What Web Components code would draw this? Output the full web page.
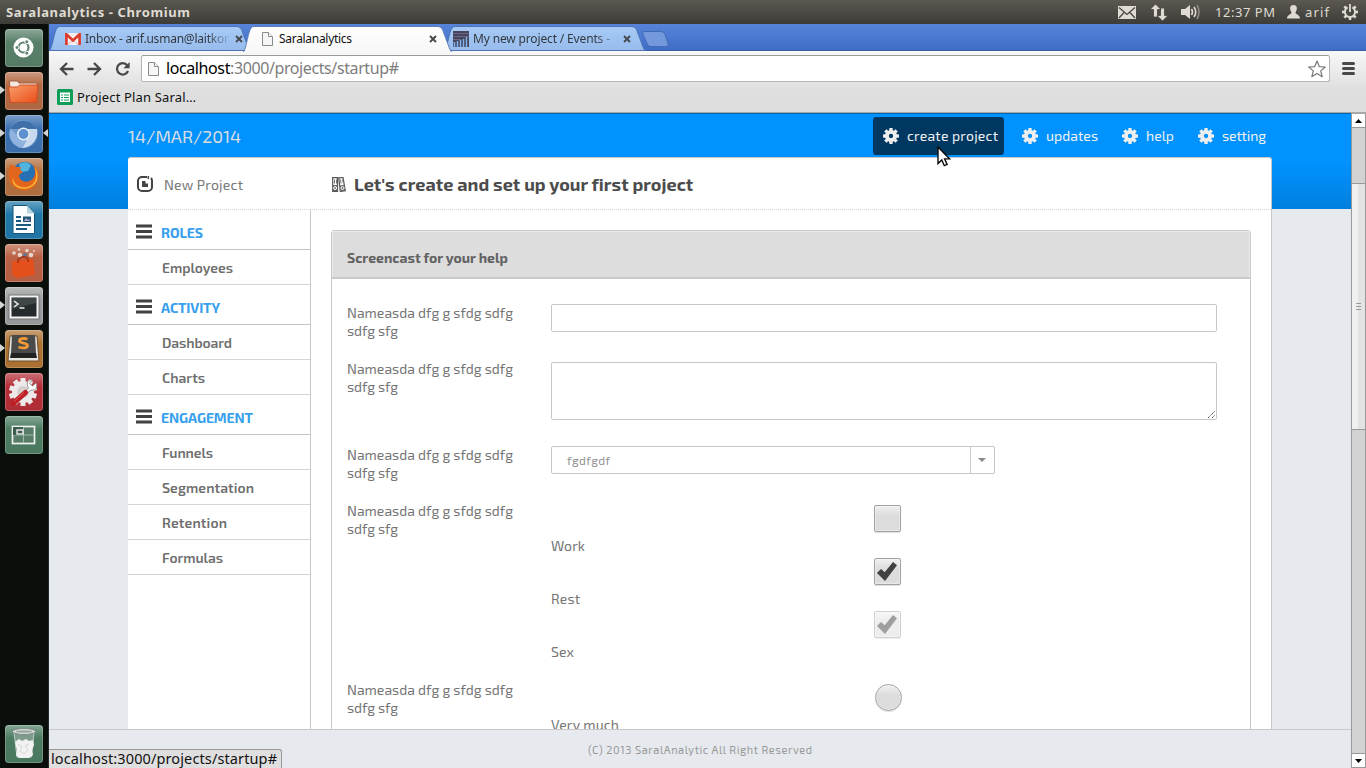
<!DOCTYPE html>
<html lang="en"><head><meta charset="utf-8"><title>Saralanalytics</title>
<style>html,body{margin:0;width:1366px;height:768px;overflow:hidden;background:#0b100d}</style></head>
<body><desktop-shell></desktop-shell>
<script>
const define = (name, css, html, init) => customElements.define(name, class extends HTMLElement {
  connectedCallback() {
    if (this.shadowRoot) return;
    const a = n => this.getAttribute(n) || '';
    this.attachShadow({mode:'open'}).innerHTML =
      `<style>*{box-sizing:border-box}:host{display:block;box-sizing:border-box}svg{display:block}${css}</style>` +
      (typeof html === 'function' ? html(a) : html);
    if (init) init(this, a);
  }
});

/* ---------- icons ---------- */
const ic = (w, h, body, vb) => `<svg width="${w}" height="${h}" viewBox="${vb || `0 0 ${w} ${h}`}">${body}</svg>`;
const gear = (() => { let s = ''; for (let i = 0; i < 8; i++) s += `<rect x="6.3" y="0" width="3.4" height="4" rx=".4" transform="rotate(${i*45} 8 8)"/>`; return `<g fill="#eee">${s}</g><circle cx="8" cy="8" r="4.1" fill="none" stroke="#eee" stroke-width="3.9"/>`; })();
const fileIcon = '<path d="M.5.5h6l4 4v9h-10z" fill="#f6f6f6" stroke="#8b8b8b"/><path d="M6.5.5v4h4" fill="#fff" stroke="#8b8b8b"/>';
const ICONS = {
  gear: ic(16,16,gear),
  mail: ic(18,13,'<rect width="18" height="13" fill="#dfdbd2"/><path d="M1 1.5l8 7 8-7M1 12l5.5-6M17 12l-5.500-6" fill="none" stroke="#4a4843" stroke-width="1.300"/>'),
  net: ic(18,17,'<path d="M5.500 0L11 5.500H7.500V13h-4V5.500H0zM12.500 17L7 11.500h3.500V4h4v7.500H18z" fill="#dfdbd2" stroke="#45433e" stroke-width=".8"/>'),
  vol: ic(20,16,'<path d="M0 5h4l5-4v14l-5-4H0z" fill="#dfdbd2"/><path d="M10.500 5q2 3 0 6M13 3q3.500 5 0 10" fill="none" stroke="#dfdbd2" stroke-width="1.600"/><path d="M16 1q4 7 0 14" fill="none" stroke="#8d8a83" stroke-width="1.600"/>'),
  user: ic(13,14,'<path d="M6.500 0c2.600 0 3.700 1.800 3.300 4-.2 1.800-1 2.600-1.300 3.600 0 2 4.500 2.200 4.500 5.900H0c0-3.700 4.500-3.900 4.500-5.900C4.200 6.600 3.400 5.800 3.200 4 2.800 1.800 3.900 0 6.500 0z" fill="#dfdbd2"/>'),
  power: (() => { let s=''; for (let i=1;i<8;i++) s += `<rect x="6.700" y="0" width="2.600" height="3" transform="rotate(${i*45} 8 8)"/>`; return ic(16,16,`<g fill="#dfdbd2">${s}<rect x="7.100" y="0" width="1.800" height="8"/></g><path d="M5.600 3.300a5.200 5.200 0 1 0 4.800 0" fill="none" stroke="#dfdbd2" stroke-width="2"/>`); })(),
  gmail: ic(16,12,'<rect width="16" height="12" rx="1" fill="#f7eeee"/><path d="M3 11.500L8 7l5 4.500" stroke="#d8b8b4" fill="none"/><path d="M1.400 12V1.300L8 7.500l6.600-6.200V12" fill="none" stroke="#dc3a2d" stroke-width="2.700"/>'),
  page: ic(11,14,fileIcon),
  events: ic(16,16,'<rect width="16" height="16" fill="#47445d"/><path d="M0 2.500h16M0 5.500h16M0 8.500h8" stroke="#6a6683"/><path d="M1.500 11v5M4.500 10v6M7.500 9v7M10.500 8v8M13.500 6v10" stroke="#7fb2ef" stroke-width="1.500"/>'),
  close: ic(8,8,'<path d="M1 1l6 6M7 1L1 7" stroke="#46494e" stroke-width="1.900"/>'),
  back: ic(15,14,'<path d="M14.500 7H2.500M8 1L2 7l6 6" fill="none" stroke="#474747" stroke-width="2.300"/>'),
  fwd: ic(15,14,'<path d="M.500 7h12M7 1l6 6-6 6" fill="none" stroke="#474747" stroke-width="2.300"/>'),
  reload: ic(15,14,'<path d="M12.200 3.300A5.700 5.700 0 1 0 13 9" fill="none" stroke="#474747" stroke-width="2.200"/><path d="M14.600 0v6.200H8.400z" fill="#474747"/>'),
  star: ic(18,18,'<path d="M9 1l2.300 5.600 6 .4-4.600 3.900 1.500 5.900L9 13.600l-5.200 3.200 1.500-5.900L.7 7l6-.4z" fill="#fff" stroke="#777" stroke-width="1.200" stroke-linejoin="round"/>'),
  menu: ic(13,13,'<path d="M1.500 1.500h10M1.500 6.500h10M1.500 11.500h10" stroke="#484848" stroke-width="3" stroke-linecap="round"/>'),
  sheet: ic(16,16,'<rect width="16" height="16" rx="1.500" fill="#0f9d58"/><rect x="3" y="3.500" width="10" height="9.500" fill="#fff"/><path d="M4 6h2M7 6h5M4 8.500h2M7 8.500h5M4 11h2M7 11h5" stroke="#0f9d58"/>'),
  newproj: ic(16,16,'<path d="M10 1H5a4 4 0 0 0-4 4v6a4 4 0 0 0 4 4h6a4 4 0 0 0 4-4V5q0-2-1-3" fill="none" stroke="#444" stroke-width="2"/><path d="M11.300 0v3" stroke="#444" stroke-width="1.500"/><path d="M5 5h3.500v2.500H11V11H5z" fill="#444"/>'),
  binders: ic(14,15,'<path d="M.7.7h4.800v13.600H.7zM6.800.9l4.200-.4 2.300 13.300-5 .6z" fill="#fff" stroke="#555" stroke-width="1.200"/><path d="M.7 8h5v6H.7zM7.700 8.500l4.700-.7 1 6-5 .7z" fill="#666"/><path d="M2.500 2.500v4M4.500 2.500v4M8.600 2.500l.4 4M10.600 2.200l.7 4" stroke="#777"/><circle cx="3.100" cy="11" r="1.500" fill="#777" stroke="#fff"/><circle cx="10.500" cy="11" r="1.500" fill="#777" stroke="#fff"/>'),
  bars: ic(16,15,'<path d="M0 2h16M0 7.500h16M0 13h16" stroke="#434343" stroke-width="3"/>'),
  check: ic(20,19,'<path d="M0 11l4-4 3.700 3.200L16 0l4 3.300L8 19z" fill="#414141"/>'),
  cursor: ic(14,21,'<path d="M1 1v16.500l3.800-3.600 2.500 5.800 2.800-1.200-2.500-5.600h5.100z" fill="#fff" stroke="#0b0b0b" stroke-width="1.400"/>'),
  grip: ic(8,8,'<path d="M1 8L8 1M5 8l3-3" stroke="#555" stroke-dasharray="1.400 .5"/>')
};
define('ui-icon', ':host{display:block;flex:none}', a => ICONS[a('name')]);

/* ---------- launcher ---------- */
const APPS = {
  dash: '<circle cx="18.500" cy="18.500" r="10" fill="#fff"/><circle cx="18.500" cy="18.500" r="5" fill="none" stroke="#608270" stroke-width="2.200"/><g fill="#608270" stroke="#fff"><circle cx="12" cy="18.500" r="2"/><circle cx="21.800" cy="12.800" r="2"/><circle cx="21.800" cy="24.200" r="2"/></g>',
  files: '<path d="M4.500 9h8l1.500 2h18v6h-27z" fill="#f3e9e2" stroke="#a35f40"/><path d="M3.500 15h9l2-2h18.500l-1.500 17.500h-26z" fill="url(#fo)" stroke="#cf4f24"/>',
  chromium: '<circle cx="18.500" cy="19" r="14" fill="#6f9bcf"/><path d="M5.500 14C10 3 27 3 31.500 14H18z" fill="#3f70a8"/><path d="M32 14c2 10-6 19-15 19l6-12-5-7z" fill="#c9daee"/><path d="M5.500 13.500c-4 9 4 19 12 19.500l4-7-8-4z" fill="#8fb2de"/><circle cx="18.500" cy="19" r="6.500" fill="#e6effa"/><circle cx="18.500" cy="19" r="4.900" fill="#5d91cf"/>',
  firefox: '<circle cx="19.500" cy="16.500" r="12.500" fill="#2670b5"/><path d="M14 6q7-4 12 1l-3 6-7 1z" fill="#52b4dd"/><path d="M6 6c2 2 4 2 6 3l4 0c-2 3 0 4 2 5l-4 3c0 8 11 9 15 2 2-4 1-8-1-12 7 5 7 15 2 21-8 8-24 5-26-8C3.500 13 4 10 6 6z" fill="#e3651b"/><path d="M29.500 9c5 12-2 22-12.500 20-6-1-9-5-9-10-4 13 19 17 24 3 1.500-5 0-10-2.500-13z" fill="#f8b635"/>',
  writer: '<path d="M8 4.500h14l7.500 8v20H8z" fill="#fafdff" stroke="#155477"/><path d="M22 4.500v8h7.500z" fill="#b6d3e2"/><path d="M11 16h5M11 20h5M11 24h15M11 28h11" stroke="#19597e" stroke-width="2"/><rect x="18" y="15.500" width="8" height="5.500" fill="#235578"/><path d="M19 20l2-3 2 2 1-1 1 2z" fill="#aac" />',
  software: '<g fill="#e9d5cb"><circle cx="9" cy="9" r="1.800"/><circle cx="15" cy="11" r="2.300"/><circle cx="22" cy="6.500" r="1.800"/><circle cx="26" cy="11" r="2.300"/><circle cx="14" cy="5.500" r="1.300"/><circle cx="29" cy="7" r="1"/></g><circle cx="20" cy="11" r="2" fill="#5e7694"/><path d="M7 17l21-2 2 16-18 3-5-3z" fill="#e4501c"/><path d="M13 19v-3q5-6 10-1v3" fill="none" stroke="#a5310f" stroke-width="1.500"/>',
  term: '<rect x="4" y="8" width="30" height="24" fill="#f4f4f4" stroke="#777"/><rect x="6.500" y="10.500" width="25" height="19" fill="#252b2c"/><path d="M7 11h24v5L7 22z" fill="#3f4647"/><path d="M9 14l4 3-4 3M14.500 21h5" stroke="#eee" stroke-width="1.500" fill="none"/>',
  sublime: '<path d="M5 6h27l2 25H3z" fill="#e9e6e2" stroke="#6f4e2a"/><path d="M7 5h23l1 18H6z" fill="#4a4a4a"/><path d="M6 23h25l1 5H5z" fill="#222"/><path d="M22.500 9c-4-1-8-.5-8 2s8 1.800 8 4.500-4.500 3-9 1.500" stroke="#f39a36" stroke-width="2.800" fill="none"/>',
  settings: (() => { let s=''; for(let i=0;i<10;i++) s+=`<rect x="15.500" y="5" width="5" height="6" transform="rotate(${i*36} 18 19)"/>`; return `<g fill="#ece9e8">${s}</g><circle cx="18" cy="19" r="11" fill="#ece9e8"/><circle cx="18" cy="19" r="6" fill="#d5cfce"/><path d="M23.500 15L20 18.500l2 2 4-3.500c5 1 7-3 5-7l-3.500 3-3-2.500 3-3.500c-4-1-7 3-4 8z" fill="#fff" stroke="#8b8786" stroke-width=".9"/><path d="M20.500 19.500L8 30.500" stroke="#bd1f25" stroke-width="5" stroke-linecap="round"/><path d="M19 19.500L9 28.500" stroke="#e05a5c" stroke-width="1"/>`; })(),
  work: '<rect x="7.500" y="10.500" width="22" height="17" fill="#577d69" stroke="#eef3f0" stroke-width="1.700"/><path d="M18.500 11v16M8 19h21" stroke="#9fb9ab"/><rect x="8" y="11" width="10" height="8" fill="#3e5c4d"/><rect x="12" y="14" width="6" height="4" fill="none" stroke="#eee" stroke-width="1.400"/>',
  trash: '<path d="M9 7h20l-2.500 25H12z" fill="#7e9b8c" stroke="#c1cec6"/><ellipse cx="19" cy="6.500" rx="11.500" ry="3" fill="#dde1de" stroke="#7e8b84"/><ellipse cx="19" cy="6.500" rx="8.500" ry="1.300" fill="#9aa8a0"/><path d="M10 17l4-3 3 2 4-2 3 2 4-1 1 5-2 5 1 5-4 3H14l-3-3 1-5z" fill="#f1f2f1"/><path d="M13 19l4 3-2 4 4 3 4-4-3-4 4-2" fill="none" stroke="#d2d5d3"/>'
};
define('launcher-app', `:host{position:relative;width:38px;height:38px;flex:none}
  .t{width:38px;height:38px;border-radius:3.500px;background:linear-gradient(rgba(255,255,255,.32),rgba(255,255,255,0) 35%,rgba(0,0,0,.03)),var(--c);box-shadow:inset 0 0 0 1px rgba(255,255,255,.22)}
  .m{position:absolute;width:0;height:0;border:4px solid transparent;top:14px}
  .l{left:-5px;border-left-color:#d5d5d5;border-left-width:5px;border-right:0}.r{right:-5px;border-right-color:#d5d5d5;border-right-width:5px;border-left:0}`,
  a => `<div class="t" style="--c:${a('c')}"><svg width="38" height="38"><defs><linearGradient id="fo" x2="1" y2="1"><stop stop-color="#f8a06c"/><stop offset="1" stop-color="#ea4c18"/></linearGradient></defs>${APPS[a('app')]}</svg></div>${a('run')?'<i class="m l"></i>':''}${a('run')==='2'?'<i class="m r"></i>':''}`);
define('app-launcher', `:host{width:49px;height:744px;background:#0a0f0c;border-right:1px solid #252b28;padding:5px 0 5px 5px;display:flex;flex-direction:column;gap:5px}
  launcher-app:last-child{margin-top:auto}`,
  [['dash','#587f68',''],['files','#b36a44',1],['chromium','#3d72b0',2],['firefox','#b4713f',1],['writer','#2178a8',''],['software','#ba6145',''],['term','#999b9c',1],['sublime','#ae7333',1],['settings','#b52f38',''],['work','#4c7c62',''],['trash','#4c7c62','']]
  .map(([n,c,r]) => `<launcher-app app="${n}" c="${c}" run="${r}"></launcher-app>`).join(''));

/* ---------- desktop panel ---------- */
define('top-panel', `:host{height:24px;display:flex;align-items:center;background:linear-gradient(#5a5850,#3e3c38);color:#dfdbd2;font:13px "Noto Sans",sans-serif;padding:0 8px 0 6px;line-height:24px}
  .s{flex:1}b{font-weight:700}`,
  `<b><fit-text w="184">Saralanalytics - Chromium</fit-text></b><span class="s"></span>
  <ui-icon name="mail"></ui-icon><ui-icon name="net" style="margin-left:14px"></ui-icon><ui-icon name="vol" style="margin-left:13px"></ui-icon>
  <fit-text w="60" style="margin-left:14px">12:37 PM</fit-text><ui-icon name="user" style="margin-left:12px"></ui-icon><fit-text w="24" style="margin-left:5px">arif</fit-text><ui-icon name="power" style="margin-left:13px"></ui-icon>`);

/* ---------- browser chrome ---------- */
define('browser-tab', `:host{position:relative;height:25px;flex:none;color:#33383f}
  :host([active]){z-index:2;color:#111;height:26px}
  .bg{position:absolute;left:0;top:0}.c{position:relative;height:26px;display:flex;align-items:center}
  .t{overflow:hidden;white-space:nowrap;flex:1;-webkit-mask:linear-gradient(90deg,#000 calc(100% - 28px),transparent calc(100% - 3px))}
  :host([active]) .t{-webkit-mask:none}`,
  a => { const w = +a('w'), act = a('on');
    return `<svg class="bg" width="${w}" height="26"><defs><linearGradient id="g" x2="0" y2="1"><stop stop-color="${act?'#fff':'#a7caf6'}"/><stop offset="1" stop-color="${act?'#f7f7f7':'#97bcec'}"/></linearGradient></defs><path d="M.5 ${act?26:24.5}C3.500 22 5 5 8.500 1.500Q9.500 .5 11.500 .5H${w-14}Q${w-11} .5 ${w-9.500} 3.500L${w-3} 21Q${w-2} 24 ${w-.5} ${act?26:24.5}${act?'':'Z'}" fill="url(#g)" stroke="${act?'#5c7fb5':'#4a74b3'}"/></svg>
    <div class="c" style="width:${w}px;padding:0 ${a('pr')}px 0 ${a('pl')}px"><ui-icon name="${a('icon')}" style="margin-right:${a('gap')}px"></ui-icon><span class="t"><slot></slot></span><ui-icon name="close"></ui-icon></div>`; },
  (el,a) => { if (a('on')) el.setAttribute('active',''); });
define('tab-strip', `:host{height:27px;background:linear-gradient(#5784da,#3f6dc7);border-bottom:1px solid #36609f;padding:2px 0 0;display:flex;font:12px/24px "Noto Sans",sans-serif}
  browser-tab[active]{margin-bottom:-1px}`,
  `<browser-tab w="202" pl="16" pr="8" gap="4" icon="gmail"><fit-text w="144">Inbox - arif.usman@laitkor</fit-text></browser-tab>
  <browser-tab w="209" pl="19" pr="15" gap="6" icon="page" on="1" style="margin-left:-8px"><fit-text w="73">Saralanalytics</fit-text></browser-tab>
  <browser-tab w="202" pl="9" pr="15" gap="4" icon="events" style="margin-left:-8px"><fit-text w="140">My new project / Events - </fit-text></browser-tab>
  <svg width="28" height="20" style="margin:5px 0 0 -4px"><path d="M2 .5h17q3 0 4 3l3 9q1 3-2 3H9q-3 0-4-3L.8 3Q0 .5 2 .5z" fill="#7398dc" stroke="#426bb4"/></svg>`);
define('tool-bar', `:host{height:62px;background:linear-gradient(#f8f8f8,#dedede 65%);border-bottom:1px solid #a8a8a8}
  .n{height:35px;display:flex;align-items:center;padding:0 10px}
  .o{width:1189px;height:27px;border:1px solid #b4b4b4;border-top-color:#9b9b9b;border-radius:2.500px;background:#fff;margin:0 12px 0 11px;display:flex;align-items:center;padding:0 3px 0 6px;font:16px/25px "Noto Sans",sans-serif;color:#7d7d7d}
  .o fit-text{margin-top:-1px}
  .o i{font-style:normal;color:#000}.o ui-icon:last-child{margin-left:auto}
  .b{display:flex;align-items:center;gap:4px;height:22px;padding-left:8px;font:13px/22px "Noto Sans",sans-serif;color:#111}`,
  `<div class="n"><ui-icon name="back"></ui-icon><ui-icon name="fwd" style="margin-left:13px"></ui-icon><ui-icon name="reload" style="margin-left:13px"></ui-icon>
  <div class="o"><ui-icon name="page" style="margin-right:7px"></ui-icon><fit-text w="233"><i>localhost</i>:3000/projects/startup#</fit-text><ui-icon name="star"></ui-icon></div><ui-icon name="menu"></ui-icon></div>
  <div class="b"><ui-icon name="sheet"></ui-icon><fit-text w="119">Project Plan Saral…</fit-text></div>`);
define('scroll-bar', `:host{width:15px;height:655px;display:flex;flex-direction:column;border:1px solid #999;border-top-color:#aaa;background:#d2d2d2}
  .a{height:14px;background:#fff;display:flex;align-items:center;justify-content:center;border-bottom:1px solid #999}.d{border:0;border-top:1px solid #999}
  .h{margin-top:55px;height:247px;border:solid #999;border-width:1px 0;background:linear-gradient(90deg,#f0f0f0 50%,#e3e3e3 50%);display:flex;flex-direction:column;gap:2px;align-items:center;justify-content:center}
  .h i{width:5px;height:1px;background:#999}.d{margin-top:auto}`,
  `<div class="a"><svg width="7" height="4"><path d="M0 4l3.500-4L7 4z"/></svg></div><div class="h"><i></i><i></i><i></i></div><div class="a d"><svg width="7" height="4"><path d="M0 0h7L3.500 4z"/></svg></div>`);

/* ---------- web page ---------- */
define('nav-link', `:host{display:flex;align-items:center;height:38px;padding-bottom:1px;border-radius:3px;color:#f2f2f2;font-size:14px;flex:none}
  :host([active]){background:#003862}ui-icon{margin-right:8px}`, '<ui-icon name="gear"></ui-icon><slot></slot>');
define('page-header', `:host{width:1144px;margin:0 auto;height:44px;padding-top:4px;display:flex;color:#d8dde2}
  .d{font-size:18px;line-height:38px;margin-right:auto}nav{display:flex}`,
  `<span class="d"><fit-text w="113">14/MAR/2014</fit-text></span><nav>
  <nav-link active style="width:131px;padding-left:10px"><fit-text w="91">create project</fit-text></nav-link>
  <nav-link style="margin-left:18px"><fit-text w="52">updates</fit-text></nav-link>
  <nav-link style="margin-left:24px"><fit-text w="28">help</fit-text></nav-link>
  <nav-link style="margin:0 6px 0 24px"><fit-text w="44">setting</fit-text></nav-link></nav>`);
define('menu-heading', `:host{display:flex;align-items:center;height:40px;border-bottom:1px solid #c4c4c4;padding:5px 0 0 8px;color:#37a0ed;font-weight:700;gap:9px}ui-icon{margin-top:-2px}`, '<ui-icon name="bars"></ui-icon><slot></slot>');
define('menu-item', `:host{height:35px;line-height:36px;border-bottom:1px solid #d5d5d5;padding-left:34px;color:#6e6e6e;font-weight:600}`, '<slot></slot>');
const head = (t,w) => `<menu-heading><fit-text w="${w}">${t}</fit-text></menu-heading>`;
const item = (t,w) => `<menu-item><fit-text w="${w}">${t}</fit-text></menu-item>`;
define('side-menu', `:host{width:183px;flex:none;border-right:1px solid #c9c9c9}`,
  head('ROLES',42)+item('Employees',71)+head('ACTIVITY',59)+item('Dashboard',70)+item('Charts',43)+head('ENGAGEMENT',92)+item('Funnels',51)+item('Segmentation',92)+item('Retention',65)+item('Formulas',61));
define('form-row', `:host{display:grid;grid-template-columns:204px 673px;line-height:18px}`,
  '<div><fit-text w="166">Nameasda dfg g sfdg sdfg</fit-text><br><fit-text w="51">sdfg sfg</fit-text></div><slot></slot>');
define('tick-option', `:host{height:53px}
  .b{width:27px;height:27px;margin:0 auto;border:1px solid #a2a2a2;border-radius:2px;background:linear-gradient(#f0f0f0,#dcdcdc 40%);box-shadow:inset 0 0 0 1px rgba(255,255,255,.35),0 1px 1px #ddd;display:flex;align-items:center;justify-content:center}
  .b ui-icon{margin-right:1px}
  .r{border-radius:50%;transform:translateX(1px)}.x{opacity:.5}.t{margin-top:5px;height:18px}`,
  a => `<div class="b ${a('kind')}">${a('checked')?'<ui-icon name="check"></ui-icon>':''}</div><div class="t"><slot></slot></div>`);
define('project-form', `:host{margin:20px 20px 0;width:920px;height:560px;border:1px solid #c9c9c9;border-radius:3px 3px 0 0}
  .h{height:48px;background:#ddd;border-bottom:2px solid #c9c9c9;box-shadow:inset 1px 1px #eaeaea,inset -1px 0 #eaeaea;padding:8px 15px 0;line-height:38px;font-weight:700;color:#626262}
  .f{padding:25px 0 0 15px}.in{width:666px;height:28px;border:1px solid #c6c6c6;border-radius:2px}
  .ta{height:58px;display:flex;align-items:flex-end;justify-content:flex-end;margin-top:2px;padding:0 1px 1px 0}
  .s{width:444px;font-size:12px;color:#929292;display:flex;align-items:center;padding-left:15px}
  .s div{margin-left:auto;width:24px;height:26px;border-left:1px solid #ccc;display:flex;align-items:center;justify-content:center;padding:0 1px 1px 0}.o{padding-top:3px}`,
  `<div class="h"><fit-text w="161">Screencast for your help</fit-text></div><div class="f">
  <form-row style="height:56px"><div class="in"></div></form-row>
  <form-row style="height:86px"><div class="in ta"><ui-icon name="grip"></ui-icon></div></form-row>
  <form-row style="height:56px"><div class="in s"><fit-text w="43">fgdfgdf</fit-text><div><svg width="8" height="4"><path d="M0 0h8L4 4z" fill="#888"/></svg></div></div></form-row>
  <form-row style="height:179px"><div class="o"><tick-option><fit-text w="34">Work</fit-text></tick-option><tick-option checked="1"><fit-text w="29">Rest</fit-text></tick-option><tick-option checked="1" kind="x"><fit-text w="23">Sex</fit-text></tick-option></div></form-row>
  <form-row><div class="o"><tick-option kind="r"><fit-text w="68">Very much</fit-text></tick-option></div></form-row></div>`);
define('page-card', `:host{width:1144px;margin:0 auto;height:572px;background:#fff;border:solid #c9c9c9;border-width:1px 1px 0 0;border-radius:3px 3px 0 0}
  header{height:52px;border-bottom:1px dotted #d2d2d2;display:flex;align-items:center;padding:1px 0 0 9px;color:#777}
  main{display:flex;color:#757575}`,
  `<header><ui-icon name="newproj"></ui-icon><fit-text w="79" style="margin-left:11px">New Project</fit-text><ui-icon name="binders" style="margin-left:89px"></ui-icon><b style="margin-left:8px;font-size:18px;color:#4c4c4c"><fit-text w="339">Let's create and set up your first project</fit-text></b></header><main><side-menu></side-menu><project-form></project-form></main>`);
define('web-page', `:host{position:relative;width:1302px;height:655px;overflow:hidden;font:14px "Exo 2",Exo,Roboto,sans-serif;display:flex;flex-direction:column;background:#e6e9ee}
  .v{height:616px;overflow:hidden;background:linear-gradient(#0065ad 0 1px,#0092ff 1px 50px,#007fdd 96px) 0 0/100% 96px no-repeat;flex:none}
  footer{height:39px;border-top:1px solid #c9c9c9;text-align:center;font-size:11px;line-height:40px;color:#999}
  .st{position:absolute;left:0;bottom:0;width:233px;height:19px;background:#dfdfdf;border:solid #999;border-width:1px 1px 0 0;border-radius:0 3px 0 0;padding-left:2px;font:14.500px/17px "Noto Sans",sans-serif;color:#111}
  .cu{position:absolute;left:888px;top:33px}`,
  `<div class="v"><page-header></page-header><page-card></page-card></div><footer><fit-text w="224">(C) 2013 SaralAnalytic All Right Reserved</fit-text></footer><div class="st"><fit-text w="226">localhost:3000/projects/startup#</fit-text></div><ui-icon class="cu" name="cursor"></ui-icon>`);
define('browser-window', `:host{width:1317px}.p{display:flex}`, '<tab-strip></tab-strip><tool-bar></tool-bar><div class="p"><web-page></web-page><scroll-bar></scroll-bar></div>');
define('desktop-shell', `:host{width:1366px;height:768px;overflow:hidden}.r{display:flex}`, '<top-panel></top-panel><div class="r"><app-launcher></app-launcher><browser-window></browser-window></div>');

/* Text run tracked to a fixed width; registered last so its surroundings are already styled. */
define('fit-text', ':host{display:inline-block;white-space:pre;vertical-align:top}', '<slot></slot>', (el,a) => {
  const n = el.textContent.length, w = +a('w'), nat = el.getBoundingClientRect().width;
  if (n > 1 && nat) { el.style.letterSpacing = (w - nat)/(n - 1) + 'px'; el.style.width = w + 'px'; }
});
</script></body></html>
